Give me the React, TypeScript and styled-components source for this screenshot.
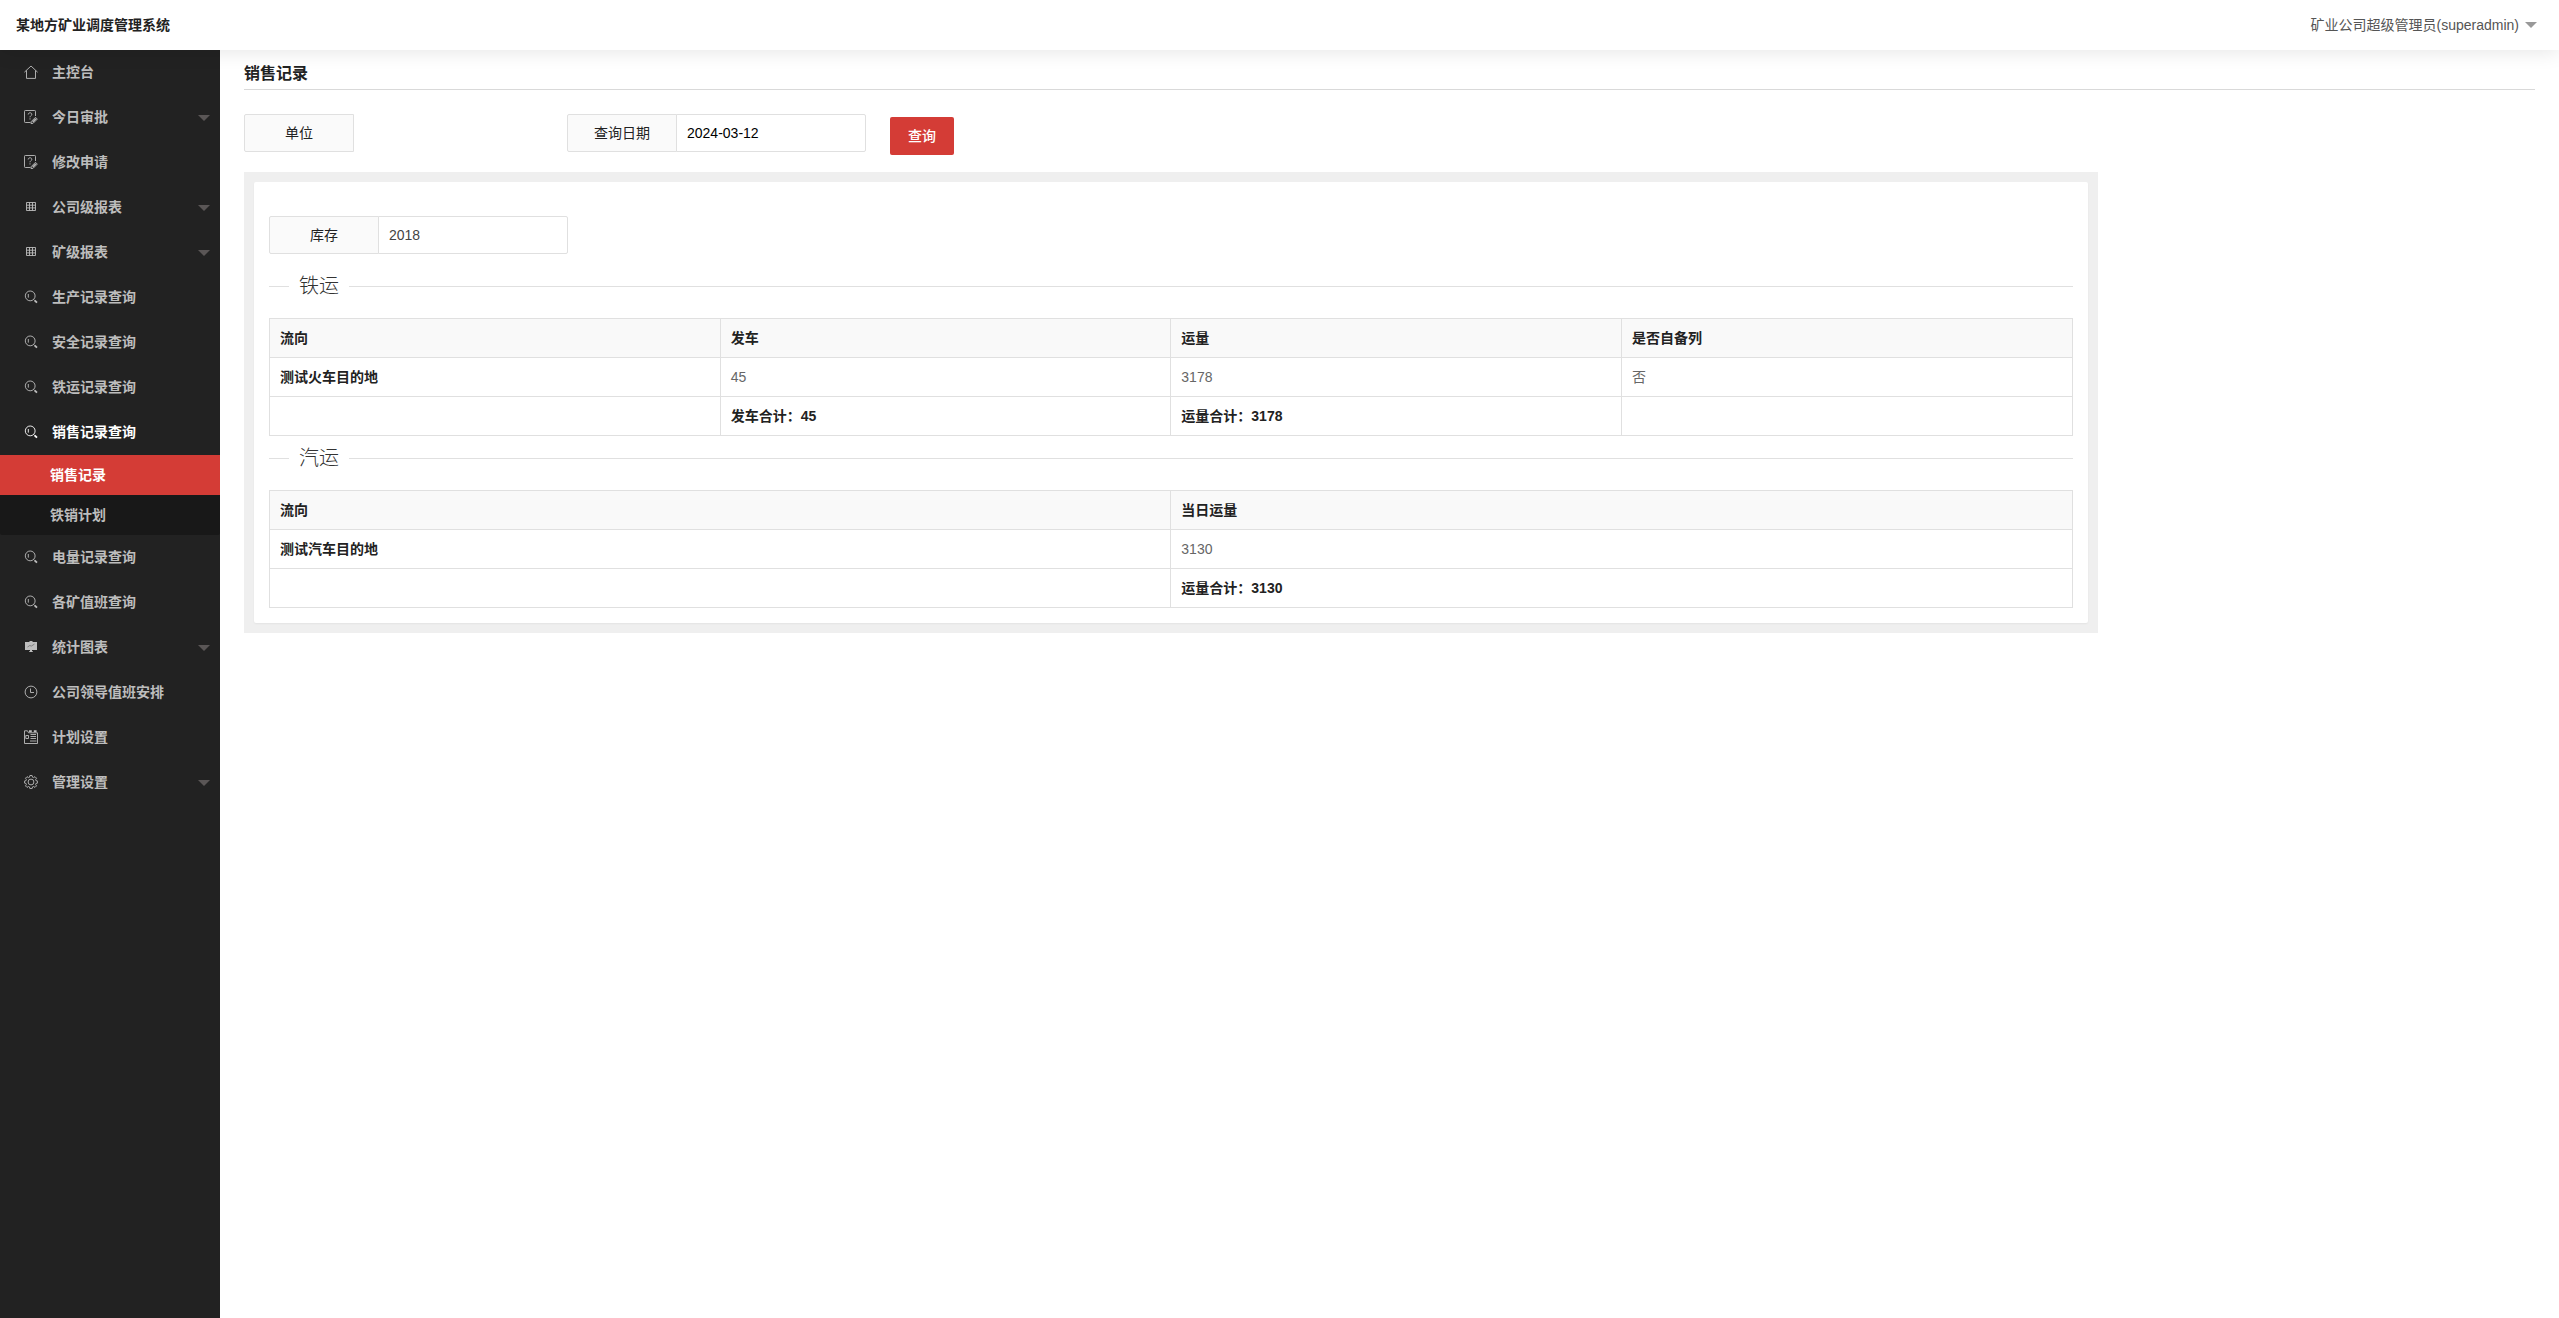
import React, { useState } from "react";
import styled, { createGlobalStyle } from "styled-components";

const GlobalStyle = createGlobalStyle`
  *, *::before, *::after { box-sizing: border-box; }
  body {
    margin: 0;
    background: #fff;
    color: #666;
    font: 14px/24px "Liberation Sans", "Noto Sans CJK SC", sans-serif;
  }
  button, input { font: inherit; }
  h1, h2 { margin: 0; }
`;

const Page = styled.div`
  min-height: 100vh;
  display: flex;
  flex-direction: column;
`;

const Header = styled.header`
  position: relative;
  z-index: 1;
  display: flex;
  align-items: center;
  justify-content: space-between;
  height: 50px;
  padding: 0 22px 0 16px;
  background: #fff;
  box-shadow: 0 2px 20px rgba(0, 0, 0, 0.1);
`;

const Brand = styled.strong`
  font-weight: 700;
  color: #222;
`;

const UserButton = styled.button`
  display: flex;
  align-items: center;
  gap: 6px;
  padding: 0;
  border: 0;
  background: none;
  color: #555;
  cursor: pointer;
`;

const Caret = styled.span<{ $color: string }>`
  border: 6px solid transparent;
  border-top-color: ${(p) => p.$color};
  border-bottom-width: 0;
`;

const Body = styled.div`
  flex: 1;
  display: flex;
`;

const Sidebar = styled.nav`
  flex: 0 0 220px;
  background: #222;
`;

const NavList = styled.ul`
  margin: 0;
  padding: 0;
  list-style: none;
`;

const NavLink = styled.a<{ $open?: boolean }>`
  display: flex;
  align-items: center;
  gap: 14px;
  height: 45px;
  padding: 0 10px 2px 24px;
  color: ${(p) => (p.$open ? "#fff" : "#bdbdbd")};
  font-weight: 700;
  text-decoration: none;

  ${Caret} { margin-top: 2px; }
`;

const NavText = styled.span`
  flex: 1;
`;

const SubList = styled(NavList)`
  background: #181818;
  border-radius: 2px;
`;

const SubLink = styled.a<{ $active?: boolean }>`
  display: block;
  padding: 0 50px;
  line-height: 40px;
  font-weight: 700;
  text-decoration: none;
  color: ${(p) => (p.$active ? "#fff" : "#bdbdbd")};
  background: ${(p) => (p.$active ? "#d43c36" : "transparent")};
`;

const Main = styled.main`
  flex: 1;
  min-width: 0;
  padding: 9px 24px 24px;
`;

const PageTitle = styled.h1`
  border-bottom: 1px solid #d9d9d9;
  font-size: 16px;
  line-height: 30px;
  font-weight: 700;
  color: #222;
`;

const Filters = styled.form`
  display: flex;
  align-items: flex-start;
  margin: 24px 0 17px;
`;

const FilterSlot = styled.div`
  flex: 0 0 323px;
`;

const Field = styled.div`
  display: flex;
  width: 299px;
`;

const FieldLabel = styled.label`
  width: 110px;
  height: 38px;
  border: 1px solid #e0e0e0;
  border-radius: 2px 0 0 2px;
  background: #fafafa;
  color: #222;
  line-height: 36px;
  text-align: center;
`;

const FieldInput = styled.input<{ $strong?: boolean }>`
  flex: 1;
  min-width: 0;
  height: 38px;
  margin-left: -1px;
  padding: 0 10px;
  border: 1px solid #e0e0e0;
  border-radius: 0 2px 2px 0;
  background: #fff;
  color: ${(p) => (p.$strong ? "#000" : "#444")};
  outline: none;
`;

const SearchButton = styled.button`
  height: 38px;
  margin-top: 3px;
  padding: 0 18px;
  border: 0;
  border-radius: 2px;
  background: #d43c36;
  color: #fff;
  font-weight: 500;
  cursor: pointer;
`;

const ResultGrid = styled.div`
  display: grid;
  grid-template-columns: minmax(0, 89fr) minmax(0, 21fr);
`;

const Panel = styled.section`
  padding: 10px;
  background: #efefef;
`;

const Card = styled.div`
  padding: 34px 15px 15px;
  border-radius: 2px;
  background: #fff;
  box-shadow: 0 1px 2px rgba(0, 0, 0, 0.05);
`;

const StockRow = styled.div`
  padding-bottom: 10px;
`;

const SectionTitle = styled.h2`
  display: flex;
  align-items: center;
  gap: 10px;
  height: 31px;
  margin: 7px 0 16px;
  font-size: 20px;
  line-height: 31px;
  font-weight: 300;
  color: #333;

  &::before, &::after {
    content: "";
    height: 1px;
    background: #e0e0e0;
  }
  &::before { width: 20px; }
  &::after { flex: 1; }
`;

const Table = styled.table`
  width: 100%;
  border-collapse: collapse;
  table-layout: fixed;
`;

const Cell = styled.td`
  height: 39px;
  padding: 0 10px;
  border: 1px solid #e0e0e0;
  line-height: 20px;
`;

const HeadCell = styled(Cell)<{ $shaded?: boolean }>`
  background: ${(p) => (p.$shaded ? "#f9f9f9" : "#fff")};
  color: #222;
  font-weight: 700;
  text-align: left;
`;

type IconName = "home" | "edit" | "table" | "search" | "chart" | "clock" | "plan" | "gear";

const Svg = styled.svg`
  flex: none;
  display: block;
  fill: none;
  stroke: currentColor;
  stroke-width: 0.9;
`;

const drawings: Record<IconName, React.ReactNode> = {
  home: <path d="M.4 7.200 7 1l6.600 6.200M2.500 5.500v7.900h9V5.500" />,
  edit: (
    <>
      <path d="M6.500 12.500H1.300a.8.8 0 0 1-.8-.8V1.300a.8.8 0 0 1 .8-.8h9.400a.8.8 0 0 1 .8.8V6" />
      <path d="M4.200 4.500c0-2.400 3.600-2.200 3.600-.1 0 1.300-1.800 1.300-1.800 2.900M6 8.300v1.200" />
      <path d="m7.300 11.500 4.200-4.200 1.800 1.800-4.200 4.200-2.100.3z" />
      <path d="m8.700 11.900 3.200-3.200" strokeWidth="1.400" />
    </>
  ),
  table: <path d="M2.500 2.500h9v8h-9zM2.500 5.200h9M2.500 7.900h9M5.500 2.500v8M8.500 2.500v8" />,
  search: (
    <>
      <circle cx="6.200" cy="5.900" r="4.900" />
      <path d="M4.300 4v3.600" />
      <path d="m9.600 9.400 1.100 1.100" />
      <path d="m10.600 10.400 2.400 2.200" strokeWidth="1.900" />
    </>
  ),
  chart: (
    <>
      <path d="M1 2h4.500V1h3v1H13v8H8v1.200h1V12H5v-.8h1V10H1z" fill="currentColor" stroke="none" />
      <path d="m3.500 7 2.200-1.400L7.500 6l3-2" stroke="#666" strokeWidth="0.700" />
    </>
  ),
  clock: (
    <>
      <circle cx="7" cy="7" r="5.900" />
      <path d="M6.500 3.500v4H10" />
    </>
  ),
  plan: (
    <>
      <path d="M.5 13.500V.8h3l1 2h9v10.700z" />
      <path d="M5 .3h2.800v1.900H5zM9.800.3h2.800v1.900H9.800z" fill="currentColor" stroke="none" />
      <path d="M1.800 5.500h2.700v3H1.800z" />
      <path d="M6.500 4.500h5.500M6.500 6.500h5.500M6.500 8.500h5.500M6 11h6.500" />
    </>
  ),
  gear: (
    <>
      <circle cx="7" cy="7" r="2.900" />
      <path d="M5.900.5h2.200l.4 1.700 1 .4 1.500-.9 1.500 1.500-.9 1.500.4 1 1.700.4v1.900l-1.700.4-.4 1 .9 1.500-1.500 1.500-1.500-.9-1 .4-.4 1.700H5.900l-.4-1.700-1-.4-1.500.9-1.500-1.500.9-1.500-.4-1L.4 8V6.100l1.600-.4.4-1-.9-1.500L3 1.700l1.500.9 1-.4z" />
    </>
  ),
};

function Icon({ name }: { name: IconName }) {
  return (
    <Svg width="14" height="14" viewBox="0 0 14 14" aria-hidden="true">
      {drawings[name]}
    </Svg>
  );
}

interface NavItem {
  icon: IconName;
  text: string;
  more?: boolean;
  children?: string[];
}

const navItems: NavItem[] = [
  { icon: "home", text: "主控台" },
  { icon: "edit", text: "今日审批", more: true },
  { icon: "edit", text: "修改申请" },
  { icon: "table", text: "公司级报表", more: true },
  { icon: "table", text: "矿级报表", more: true },
  { icon: "search", text: "生产记录查询" },
  { icon: "search", text: "安全记录查询" },
  { icon: "search", text: "铁运记录查询" },
  { icon: "search", text: "销售记录查询", children: ["销售记录", "铁销计划"] },
  { icon: "search", text: "电量记录查询" },
  { icon: "search", text: "各矿值班查询" },
  { icon: "chart", text: "统计图表", more: true },
  { icon: "clock", text: "公司领导值班安排" },
  { icon: "plan", text: "计划设置" },
  { icon: "gear", text: "管理设置", more: true },
];

interface SalesTableProps {
  columns: string[];
  rows: string[][];
  totals: string[];
}

function SalesTable({ columns, rows, totals }: SalesTableProps) {
  return (
    <Table>
      <thead>
        <tr>
          {columns.map((c) => (
            <HeadCell as="th" scope="col" $shaded key={c}>{c}</HeadCell>
          ))}
        </tr>
      </thead>
      <tbody>
        {rows.map(([name, ...values]) => (
          <tr key={name}>
            <HeadCell as="th" scope="row">{name}</HeadCell>
            {values.map((v, i) => <Cell key={i}>{v}</Cell>)}
          </tr>
        ))}
        <tr>
          {totals.map((t, i) => <HeadCell key={i}>{t}</HeadCell>)}
        </tr>
      </tbody>
    </Table>
  );
}

export default function App() {
  const [date, setDate] = useState("2024-03-12");
  return (
    <Page>
      <GlobalStyle />
      <Header>
        <Brand>某地方矿业调度管理系统</Brand>
        <UserButton type="button">
          矿业公司超级管理员(superadmin)
          <Caret $color="#999" />
        </UserButton>
      </Header>
      <Body>
        <Sidebar>
          <NavList>
            {navItems.map((item) => (
              <li key={item.text}>
                <NavLink href="#" $open={!!item.children}>
                  <Icon name={item.icon} />
                  <NavText>{item.text}</NavText>
                  {item.more && <Caret $color="#5a5656" />}
                </NavLink>
                {item.children && (
                  <SubList>
                    {item.children.map((child, i) => (
                      <li key={child}>
                        <SubLink href="#" $active={i === 0}>{child}</SubLink>
                      </li>
                    ))}
                  </SubList>
                )}
              </li>
            ))}
          </NavList>
        </Sidebar>
        <Main>
          <PageTitle>销售记录</PageTitle>
          <Filters onSubmit={(e) => e.preventDefault()}>
            <FilterSlot>
              <Field>
                <FieldLabel as="span">单位</FieldLabel>
              </Field>
            </FilterSlot>
            <FilterSlot>
              <Field>
                <FieldLabel htmlFor="date">查询日期</FieldLabel>
                <FieldInput id="date" $strong value={date} onChange={(e) => setDate(e.target.value)} />
              </Field>
            </FilterSlot>
            <SearchButton type="submit">查询</SearchButton>
          </Filters>
          <ResultGrid>
            <Panel>
              <Card>
                <StockRow>
                  <Field>
                    <FieldLabel htmlFor="stock">库存</FieldLabel>
                    <FieldInput id="stock" readOnly value="2018" />
                  </Field>
                </StockRow>
                <SectionTitle>铁运</SectionTitle>
                <SalesTable
                  columns={["流向", "发车", "运量", "是否自备列"]}
                  rows={[["测试火车目的地", "45", "3178", "否"]]}
                  totals={["", "发车合计：45", "运量合计：3178", ""]}
                />
                <SectionTitle>汽运</SectionTitle>
                <SalesTable
                  columns={["流向", "当日运量"]}
                  rows={[["测试汽车目的地", "3130"]]}
                  totals={["", "运量合计：3130"]}
                />
              </Card>
            </Panel>
          </ResultGrid>
        </Main>
      </Body>
    </Page>
  );
}
